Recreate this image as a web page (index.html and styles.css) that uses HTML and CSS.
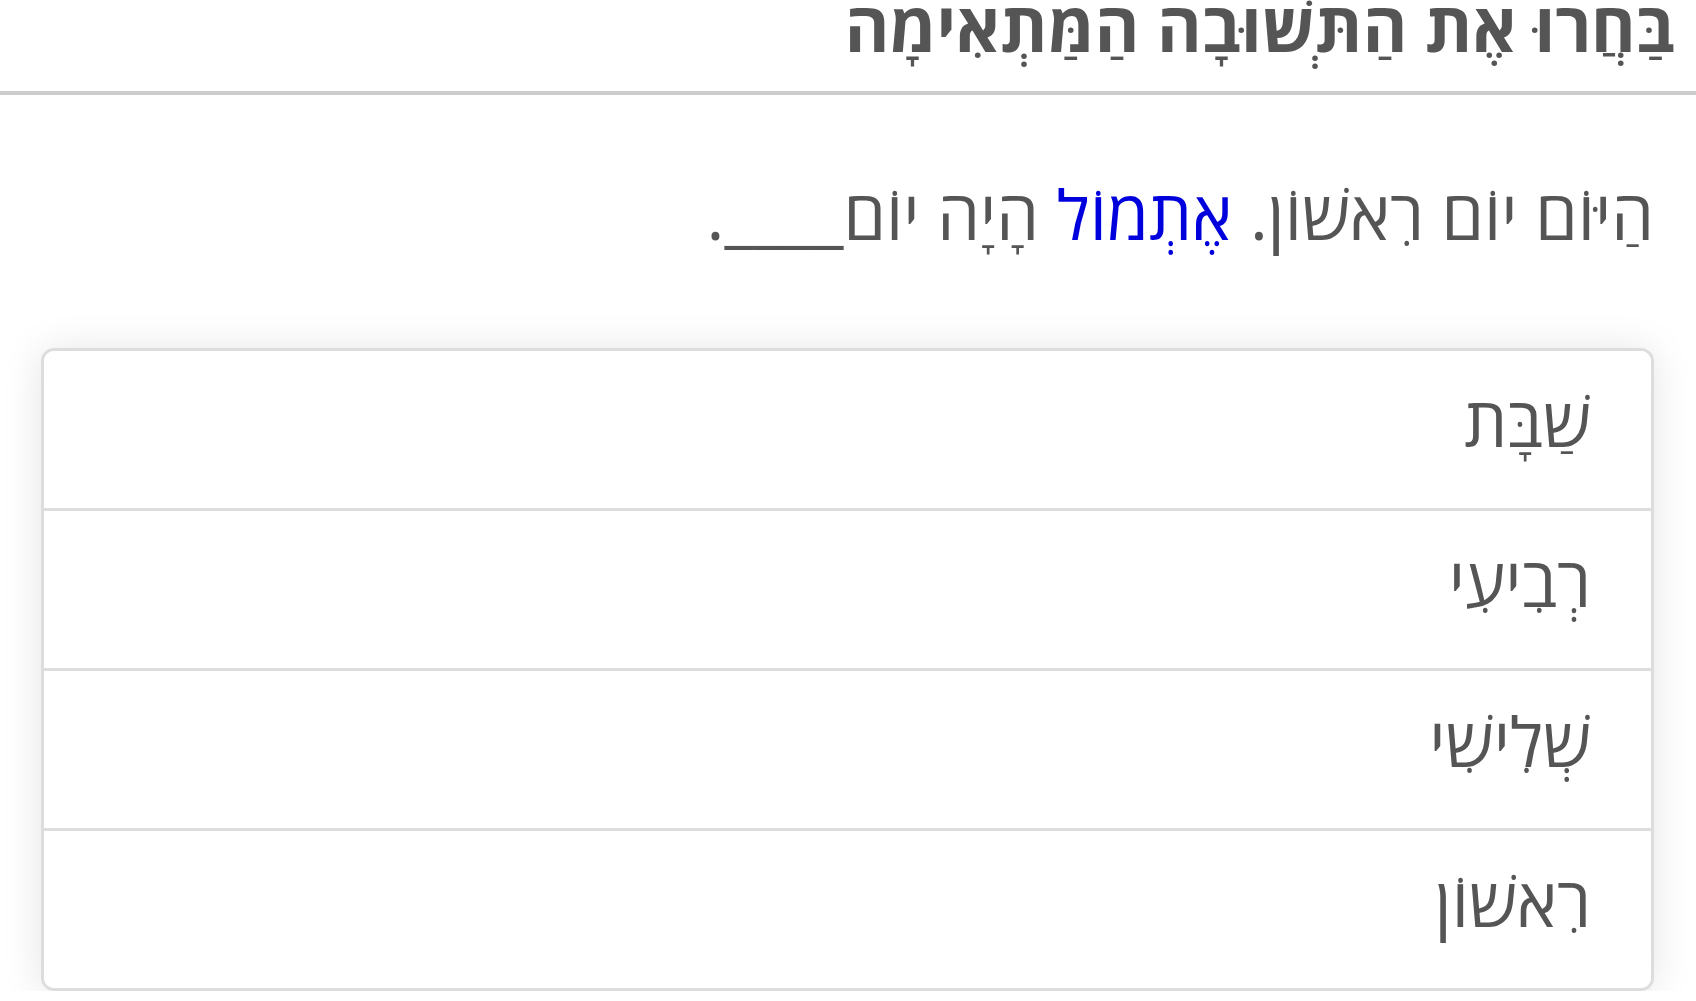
FILE: index.html
```html
<!DOCTYPE html>
<html lang="he" dir="rtl">
<head>
<meta charset="utf-8">
<title>בַּחֲרוּ אֶת הַתְּשׁוּבָה הַמַּתְאִימָה</title>
<link rel="stylesheet" href="styles.css">
</head>
<body>
<header class="title-bar">
  <h1 class="title">בַּחֲרוּ אֶת הַתְּשׁוּבָה הַמַּתְאִימָה</h1>
</header>
<main class="quiz">
  <p class="prompt">הַיּוֹם יוֹם רִאשׁוֹן. <span class="hint">אֶתְמוֹל</span> הָיָה יוֹם<span class="blank">____</span>.</p>
  <ul class="options">
    <li class="option">שַׁבָּת</li>
    <li class="option">רְבִיעִי</li>
    <li class="option">שְׁלִישִׁי</li>
    <li class="option">רִאשׁוֹן</li>
  </ul>
</main>
</body>
</html>
```

FILE: styles.css
```css
html, body {
  margin: 0;
  padding: 0;
  background: #fff;
}

body {
  font-family: "Open Sans", "DejaVu Sans", sans-serif;
  color: #555;
  overflow: hidden;
}

.title-bar {
  height: 91px;
  border-bottom: 4px solid #ccc;
  padding: 0 21px;
}

.title {
  margin: 0;
  font-size: 68px;
  font-weight: 700;
  line-height: 52px;
  color: #555;
  white-space: nowrap;
}

.quiz {
  padding: 0 42px 0 41px;
}

.prompt {
  margin: 0;
  padding-top: 74px;
  font-size: 68px;
  line-height: 90px;
  white-space: nowrap;
}

.hint {
  color: #0000dd;
}

.options {
  list-style: none;
  margin: 89px 0 0;
  padding: 0;
  border: 3px solid #ddd;
  border-radius: 13px;
  box-shadow: 0 2px 40px rgba(0, 0, 0, 0.11);
  overflow: hidden;
}

.option {
  display: flex;
  align-items: center;
  box-sizing: border-box;
  height: 157px;
  padding: 0 60px 18px 0;
  font-size: 68px;
  background: #fff;
}

.option + .option {
  height: 160px;
  border-top: 3px solid #ddd;
}
```
